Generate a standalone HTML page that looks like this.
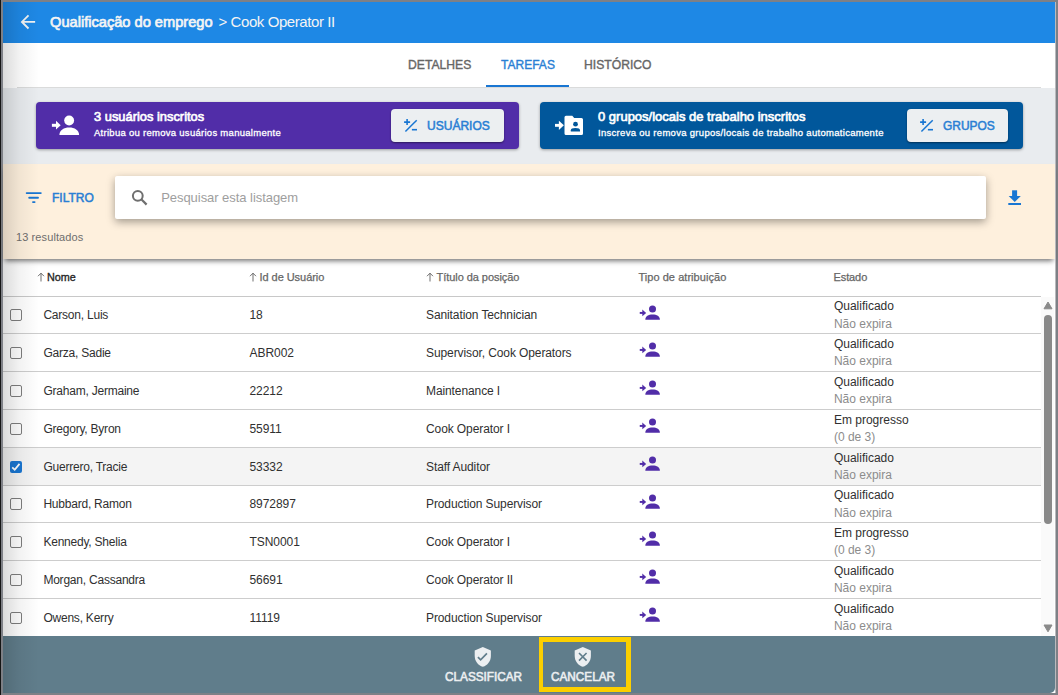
<!DOCTYPE html>
<html><head><meta charset="utf-8">
<style>
*{box-sizing:border-box;margin:0;padding:0}
html,body{width:1058px;height:695px;overflow:hidden;background:#7e8086;font-family:"Liberation Sans",sans-serif;position:relative}
.abs{position:absolute}
.t{position:absolute;white-space:nowrap}
.card{border-radius:4px;box-shadow:0 1px 3px rgba(0,0,0,.35)}
.btn{background:#eceff1;border-radius:4px;box-shadow:0 1px 2px rgba(0,0,0,.45)}
</style></head><body>
<div class="abs" style="left:0;top:0;width:1px;height:695px;background:#151515"></div>
<div class="abs" style="left:3px;top:2px;width:1052px;height:691px;background:#fff"></div>
<div class="abs" style="left:3px;top:2px;width:1052px;height:41px;background:#1e88e5"></div>
<svg class="abs" style="left:16.9px;top:11.3px" width="21.75" height="21.75" viewBox="0 0 24 24"><path fill="#f3f3f3" d="M20 11H7.83l5.59-5.59L12 4l-8 8 8 8 1.41-1.41L7.83 13H20v-2z"/></svg>
<div class="t" style="left:50px;top:14.40px;font-size:15px;line-height:15px;font-weight:normal;color:#f4f4f4;letter-spacing:0px;-webkit-text-stroke:0.7px #f4f4f4;transform:scaleX(0.975);transform-origin:0 0">Qualificação do emprego</div>
<div class="t" style="left:218.5px;top:14.40px;font-size:15px;line-height:15px;font-weight:normal;color:#f4f4f4;letter-spacing:-0.42px;">&gt; Cook Operator II</div>
<div class="abs" style="left:17px;top:87px;width:1024px;height:1px;background:#dadbdb"></div>
<div class="t" style="left:407.5px;top:57.74px;font-size:13px;line-height:13px;font-weight:normal;color:#666;letter-spacing:0px;-webkit-text-stroke:0.4px #666;transform:scaleX(0.935);transform-origin:0 0">DETALHES</div>
<div class="t" style="left:501px;top:57.74px;font-size:13px;line-height:13px;font-weight:normal;color:#2a7fd4;letter-spacing:0px;-webkit-text-stroke:0.4px #2a7fd4;transform:scaleX(0.925);transform-origin:0 0">TAREFAS</div>
<div class="t" style="left:584px;top:57.74px;font-size:13px;line-height:13px;font-weight:normal;color:#666;letter-spacing:0px;-webkit-text-stroke:0.4px #666;transform:scaleX(0.935);transform-origin:0 0">HISTÓRICO</div>
<div class="abs" style="left:486px;top:85px;width:83px;height:2px;background:#1976d2"></div>
<div class="abs" style="left:3px;top:88px;width:1052px;height:76px;background:#e9ecef"></div>
<div class="abs card" style="left:36px;top:102px;width:483px;height:47px;background:#512da8"></div>
<div class="abs card" style="left:540px;top:102px;width:483px;height:47px;background:#01579b"></div>
<svg class="abs" style="left:48px;top:110px" width="36" height="30" viewBox="0 0 36 30"><g fill="#fff">
<rect x="3.9" y="13.8" width="5" height="3"/><path d="M8 10.8L12.7 15.3 8 19.6z"/>
<circle cx="21.15" cy="10.55" r="4.95"/>
<path d="M11.4 25C11.4 20 16 17.5 21.25 17.5S31.1 20 31.1 25z"/></g></svg>
<div class="t" style="left:94px;top:109.89px;font-size:13px;line-height:13px;font-weight:normal;color:#fff;letter-spacing:0px;-webkit-text-stroke:0.65px #fff;transform:scaleX(0.99);transform-origin:0 0">3 usuários inscritos</div>
<div class="t" style="left:94px;top:127.86px;font-size:9.5px;line-height:9.5px;font-weight:normal;color:#fff;letter-spacing:0.28px;-webkit-text-stroke:0.3px #fff">Atribua ou remova usuários manualmente</div>
<div class="abs btn" style="left:391px;top:109px;width:113px;height:33px"></div>
<svg class="abs" style="left:396px;top:112px" width="28" height="28" viewBox="0 0 28 28"><g stroke="#1976d2" fill="none">
<path d="M8.1 10.1H14.1M11.1 7V13.1" stroke-width="1.6"/><path d="M9.4 19.5L20.7 8.2" stroke-width="1.5"/><path d="M15.9 17.7H21" stroke-width="1.6"/></g></svg>
<div class="t" style="left:427px;top:119.09px;font-size:13px;line-height:13px;font-weight:normal;color:#2a7fd4;letter-spacing:0px;-webkit-text-stroke:0.55px #2a7fd4;transform:scaleX(0.925);transform-origin:0 0">USUÁRIOS</div>
<svg class="abs" style="left:552px;top:110px" width="36" height="30" viewBox="0 0 36 30"><g fill="#fff">
<rect x="3" y="13.9" width="4.5" height="2.9"/><path d="M6.9 10.8L11.9 15.35 6.9 19.9z"/>
<path d="M14 5.8H20.3L22.2 8H29.5Q31 8 31 9.5V23.5Q31 25 29.5 25H14Q12.5 25 12.5 23.5V7.3Q12.5 5.8 14 5.8z"/></g>
<g fill="#01579b"><circle cx="23.5" cy="14.2" r="2.4"/><path d="M18.8 21.6V20.3Q18.8 18.1 23.4 18.1T28 20.3V21.6z"/></g></svg>
<div class="t" style="left:598px;top:109.89px;font-size:13px;line-height:13px;font-weight:normal;color:#fff;letter-spacing:0px;-webkit-text-stroke:0.65px #fff;transform:scaleX(1.0);transform-origin:0 0">0 grupos/locais de trabalho inscritos</div>
<div class="t" style="left:598px;top:127.86px;font-size:9.5px;line-height:9.5px;font-weight:normal;color:#fff;letter-spacing:0.3px;-webkit-text-stroke:0.3px #fff">Inscreva ou remova grupos/locais de trabalho automaticamente</div>
<div class="abs btn" style="left:907px;top:109px;width:101px;height:33px"></div>
<svg class="abs" style="left:912px;top:112px" width="28" height="28" viewBox="0 0 28 28"><g stroke="#1976d2" fill="none">
<path d="M8.1 10.1H14.1M11.1 7V13.1" stroke-width="1.6"/><path d="M9.4 19.5L20.7 8.2" stroke-width="1.5"/><path d="M15.9 17.7H21" stroke-width="1.6"/></g></svg>
<div class="t" style="left:943px;top:119.09px;font-size:13px;line-height:13px;font-weight:normal;color:#2a7fd4;letter-spacing:0px;-webkit-text-stroke:0.55px #2a7fd4;transform:scaleX(0.92);transform-origin:0 0">GRUPOS</div>
<div class="abs" style="left:3px;top:164px;width:1052px;height:94.5px;background:#fef0dd;box-shadow:0 4px 5px -2px rgba(0,0,0,.55)"></div>
<svg class="abs" style="left:20px;top:185px" width="28" height="25" viewBox="0 0 28 25"><g stroke="#1976d2" stroke-width="1.9" stroke-linecap="round">
<path d="M6.7 8.1H20.8M9.2 12.7H18M13 17.1H14.6"/></g></svg>
<div class="t" style="left:51.5px;top:190.89px;font-size:13px;line-height:13px;font-weight:normal;color:#2a7fd4;letter-spacing:0px;-webkit-text-stroke:0.55px #2a7fd4;transform:scaleX(0.925);transform-origin:0 0">FILTRO</div>
<div class="abs" style="left:115px;top:176px;width:871px;height:43px;background:#fff;border-radius:2px;box-shadow:0 3px 8px rgba(0,0,0,.36)"></div>
<svg class="abs" style="left:128px;top:186px" width="22" height="22" viewBox="0 0 22 22"><g stroke="#6f6f6f" fill="none">
<circle cx="9.8" cy="9.8" r="4.9" stroke-width="2"/><path d="M13.3 13.3L18.6 18.6" stroke-width="2.2"/></g></svg>
<div class="t" style="left:161.2px;top:190.99px;font-size:13px;line-height:13px;font-weight:normal;color:#9e9e9e;letter-spacing:-0.05px;">Pesquisar esta listagem</div>
<svg class="abs" style="left:1000px;top:183px" width="28" height="28" viewBox="0 0 28 28"><g fill="#1976d2">
<rect x="12.1" y="7.3" width="5" height="6"/><path d="M8.7 12.9H20.8L14.75 19z"/><rect x="8.3" y="20" width="12.7" height="2"/></g></svg>
<div class="t" style="left:16px;top:231.69px;font-size:11px;line-height:11px;font-weight:normal;color:#6e6e6e;letter-spacing:0.1px;">13 resultados</div>
<div class="abs" style="left:3px;top:296px;width:1038px;height:1px;background:#c8c8c8"></div>
<svg class="abs" style="left:36.5px;top:272px" width="8" height="10" viewBox="0 0 8 10"><path d="M4 9.5V1.2M1 4.2L4 1.2 7 4.2" stroke="#555" stroke-width="0.85" fill="none"/></svg>
<div class="t" style="left:46.6px;top:271.69px;font-size:11px;line-height:11px;font-weight:normal;color:#262626;letter-spacing:0px;-webkit-text-stroke:0.35px #262626;transform:scaleX(0.98);transform-origin:0 0">Nome</div>
<svg class="abs" style="left:249px;top:272px" width="8" height="10" viewBox="0 0 8 10"><path d="M4 9.5V1.2M1 4.2L4 1.2 7 4.2" stroke="#555" stroke-width="0.85" fill="none"/></svg>
<div class="t" style="left:259.5px;top:271.69px;font-size:11px;line-height:11px;font-weight:normal;color:#666;letter-spacing:-0.05px;-webkit-text-stroke:0.25px #666">Id de Usuário</div>
<svg class="abs" style="left:426px;top:272px" width="8" height="10" viewBox="0 0 8 10"><path d="M4 9.5V1.2M1 4.2L4 1.2 7 4.2" stroke="#555" stroke-width="0.85" fill="none"/></svg>
<div class="t" style="left:436.5px;top:271.69px;font-size:11px;line-height:11px;font-weight:normal;color:#666;letter-spacing:-0.05px;-webkit-text-stroke:0.25px #666">Título da posição</div>
<div class="t" style="left:638.4px;top:271.69px;font-size:11px;line-height:11px;font-weight:normal;color:#666;letter-spacing:0.05px;-webkit-text-stroke:0.25px #666">Tipo de atribuição</div>
<div class="t" style="left:833.5px;top:271.69px;font-size:11px;line-height:11px;font-weight:normal;color:#666;letter-spacing:-0.1px;-webkit-text-stroke:0.25px #666">Estado</div>
<div class="abs" style="left:3px;top:333px;width:1038px;height:1px;background:#cdcdcd"></div>
<div class="abs" style="left:10px;top:309.00px;width:12px;height:12px;border:1.2px solid #7e7e7e;border-radius:2px;background:transparent"></div>
<div class="t" style="left:43.4px;top:309.04px;font-size:12px;line-height:12px;font-weight:normal;color:#303030;letter-spacing:-0.22px;">Carson, Luis</div>
<div class="t" style="left:249.5px;top:309.04px;font-size:12px;line-height:12px;font-weight:normal;color:#303030;letter-spacing:-0.05px;">18</div>
<div class="t" style="left:426px;top:309.04px;font-size:12px;line-height:12px;font-weight:normal;color:#303030;letter-spacing:-0.1px;">Sanitation Technician</div>
<svg class="abs" style="left:634px;top:299.60px" width="30" height="25" viewBox="0 0 30 25"><g fill="#512da8">
<rect x="5.75" y="11.95" width="3.5" height="1.95"/><path d="M8.3 9.6L12.2 12.9 8.3 16.2z"/><circle cx="18.5" cy="9" r="3.5"/>
<path d="M11.3 19.8C11.3 16.5 14.4 14.6 18.6 14.6S25.9 16.5 25.9 19.8z"/></g></svg>
<div class="t" style="left:833.9px;top:300.14px;font-size:12px;line-height:12px;font-weight:normal;color:#303030;letter-spacing:0px;">Qualificado</div>
<div class="t" style="left:833.9px;top:317.94px;font-size:12px;line-height:12px;font-weight:normal;color:#8c8c8c;letter-spacing:0px;">Não expira</div>
<div class="abs" style="left:3px;top:371px;width:1038px;height:1px;background:#cdcdcd"></div>
<div class="abs" style="left:10px;top:346.50px;width:12px;height:12px;border:1.2px solid #7e7e7e;border-radius:2px;background:transparent"></div>
<div class="t" style="left:43.4px;top:346.54px;font-size:12px;line-height:12px;font-weight:normal;color:#303030;letter-spacing:-0.22px;">Garza, Sadie</div>
<div class="t" style="left:249.5px;top:346.54px;font-size:12px;line-height:12px;font-weight:normal;color:#303030;letter-spacing:-0.05px;">ABR002</div>
<div class="t" style="left:426px;top:346.54px;font-size:12px;line-height:12px;font-weight:normal;color:#303030;letter-spacing:-0.1px;">Supervisor, Cook Operators</div>
<svg class="abs" style="left:634px;top:337.10px" width="30" height="25" viewBox="0 0 30 25"><g fill="#512da8">
<rect x="5.75" y="11.95" width="3.5" height="1.95"/><path d="M8.3 9.6L12.2 12.9 8.3 16.2z"/><circle cx="18.5" cy="9" r="3.5"/>
<path d="M11.3 19.8C11.3 16.5 14.4 14.6 18.6 14.6S25.9 16.5 25.9 19.8z"/></g></svg>
<div class="t" style="left:833.9px;top:337.64px;font-size:12px;line-height:12px;font-weight:normal;color:#303030;letter-spacing:0px;">Qualificado</div>
<div class="t" style="left:833.9px;top:355.44px;font-size:12px;line-height:12px;font-weight:normal;color:#8c8c8c;letter-spacing:0px;">Não expira</div>
<div class="abs" style="left:3px;top:409px;width:1038px;height:1px;background:#cdcdcd"></div>
<div class="abs" style="left:10px;top:384.50px;width:12px;height:12px;border:1.2px solid #7e7e7e;border-radius:2px;background:transparent"></div>
<div class="t" style="left:43.4px;top:384.54px;font-size:12px;line-height:12px;font-weight:normal;color:#303030;letter-spacing:-0.22px;">Graham, Jermaine</div>
<div class="t" style="left:249.5px;top:384.54px;font-size:12px;line-height:12px;font-weight:normal;color:#303030;letter-spacing:-0.05px;">22212</div>
<div class="t" style="left:426px;top:384.54px;font-size:12px;line-height:12px;font-weight:normal;color:#303030;letter-spacing:-0.1px;">Maintenance I</div>
<svg class="abs" style="left:634px;top:375.10px" width="30" height="25" viewBox="0 0 30 25"><g fill="#512da8">
<rect x="5.75" y="11.95" width="3.5" height="1.95"/><path d="M8.3 9.6L12.2 12.9 8.3 16.2z"/><circle cx="18.5" cy="9" r="3.5"/>
<path d="M11.3 19.8C11.3 16.5 14.4 14.6 18.6 14.6S25.9 16.5 25.9 19.8z"/></g></svg>
<div class="t" style="left:833.9px;top:375.64px;font-size:12px;line-height:12px;font-weight:normal;color:#303030;letter-spacing:0px;">Qualificado</div>
<div class="t" style="left:833.9px;top:393.44px;font-size:12px;line-height:12px;font-weight:normal;color:#8c8c8c;letter-spacing:0px;">Não expira</div>
<div class="abs" style="left:3px;top:447px;width:1038px;height:1px;background:#cdcdcd"></div>
<div class="abs" style="left:10px;top:422.50px;width:12px;height:12px;border:1.2px solid #7e7e7e;border-radius:2px;background:transparent"></div>
<div class="t" style="left:43.4px;top:422.54px;font-size:12px;line-height:12px;font-weight:normal;color:#303030;letter-spacing:-0.22px;">Gregory, Byron</div>
<div class="t" style="left:249.5px;top:422.54px;font-size:12px;line-height:12px;font-weight:normal;color:#303030;letter-spacing:-0.05px;">55911</div>
<div class="t" style="left:426px;top:422.54px;font-size:12px;line-height:12px;font-weight:normal;color:#303030;letter-spacing:-0.1px;">Cook Operator I</div>
<svg class="abs" style="left:634px;top:413.10px" width="30" height="25" viewBox="0 0 30 25"><g fill="#512da8">
<rect x="5.75" y="11.95" width="3.5" height="1.95"/><path d="M8.3 9.6L12.2 12.9 8.3 16.2z"/><circle cx="18.5" cy="9" r="3.5"/>
<path d="M11.3 19.8C11.3 16.5 14.4 14.6 18.6 14.6S25.9 16.5 25.9 19.8z"/></g></svg>
<div class="t" style="left:833.9px;top:413.64px;font-size:12px;line-height:12px;font-weight:normal;color:#303030;letter-spacing:0px;">Em progresso</div>
<div class="t" style="left:833.9px;top:431.44px;font-size:12px;line-height:12px;font-weight:normal;color:#8c8c8c;letter-spacing:0px;">(0 de 3)</div>
<div class="abs" style="left:3px;top:448px;width:1038px;height:37px;background:#f4f4f4"></div>
<div class="abs" style="left:3px;top:485px;width:1038px;height:1px;background:#cdcdcd"></div>
<svg class="abs" style="left:10px;top:460.50px" width="12" height="12" viewBox="0 0 12 12"><rect x="0" y="0" width="12" height="12" rx="2" fill="#1976d2"/><path d="M2.2 6.4L4.7 8.7 9.5 2.9" stroke="#fff" stroke-width="1.8" fill="none"/></svg>
<div class="t" style="left:43.4px;top:460.54px;font-size:12px;line-height:12px;font-weight:normal;color:#303030;letter-spacing:-0.22px;">Guerrero, Tracie</div>
<div class="t" style="left:249.5px;top:460.54px;font-size:12px;line-height:12px;font-weight:normal;color:#303030;letter-spacing:-0.05px;">53332</div>
<div class="t" style="left:426px;top:460.54px;font-size:12px;line-height:12px;font-weight:normal;color:#303030;letter-spacing:-0.1px;">Staff Auditor</div>
<svg class="abs" style="left:634px;top:451.10px" width="30" height="25" viewBox="0 0 30 25"><g fill="#512da8">
<rect x="5.75" y="11.95" width="3.5" height="1.95"/><path d="M8.3 9.6L12.2 12.9 8.3 16.2z"/><circle cx="18.5" cy="9" r="3.5"/>
<path d="M11.3 19.8C11.3 16.5 14.4 14.6 18.6 14.6S25.9 16.5 25.9 19.8z"/></g></svg>
<div class="t" style="left:833.9px;top:451.64px;font-size:12px;line-height:12px;font-weight:normal;color:#303030;letter-spacing:0px;">Qualificado</div>
<div class="t" style="left:833.9px;top:469.44px;font-size:12px;line-height:12px;font-weight:normal;color:#8c8c8c;letter-spacing:0px;">Não expira</div>
<div class="abs" style="left:3px;top:522px;width:1038px;height:1px;background:#cdcdcd"></div>
<div class="abs" style="left:10px;top:498.00px;width:12px;height:12px;border:1.2px solid #7e7e7e;border-radius:2px;background:transparent"></div>
<div class="t" style="left:43.4px;top:498.04px;font-size:12px;line-height:12px;font-weight:normal;color:#303030;letter-spacing:-0.22px;">Hubbard, Ramon</div>
<div class="t" style="left:249.5px;top:498.04px;font-size:12px;line-height:12px;font-weight:normal;color:#303030;letter-spacing:-0.05px;">8972897</div>
<div class="t" style="left:426px;top:498.04px;font-size:12px;line-height:12px;font-weight:normal;color:#303030;letter-spacing:-0.1px;">Production Supervisor</div>
<svg class="abs" style="left:634px;top:488.60px" width="30" height="25" viewBox="0 0 30 25"><g fill="#512da8">
<rect x="5.75" y="11.95" width="3.5" height="1.95"/><path d="M8.3 9.6L12.2 12.9 8.3 16.2z"/><circle cx="18.5" cy="9" r="3.5"/>
<path d="M11.3 19.8C11.3 16.5 14.4 14.6 18.6 14.6S25.9 16.5 25.9 19.8z"/></g></svg>
<div class="t" style="left:833.9px;top:489.14px;font-size:12px;line-height:12px;font-weight:normal;color:#303030;letter-spacing:0px;">Qualificado</div>
<div class="t" style="left:833.9px;top:506.94px;font-size:12px;line-height:12px;font-weight:normal;color:#8c8c8c;letter-spacing:0px;">Não expira</div>
<div class="abs" style="left:3px;top:560px;width:1038px;height:1px;background:#cdcdcd"></div>
<div class="abs" style="left:10px;top:535.50px;width:12px;height:12px;border:1.2px solid #7e7e7e;border-radius:2px;background:transparent"></div>
<div class="t" style="left:43.4px;top:535.54px;font-size:12px;line-height:12px;font-weight:normal;color:#303030;letter-spacing:-0.22px;">Kennedy, Shelia</div>
<div class="t" style="left:249.5px;top:535.54px;font-size:12px;line-height:12px;font-weight:normal;color:#303030;letter-spacing:-0.05px;">TSN0001</div>
<div class="t" style="left:426px;top:535.54px;font-size:12px;line-height:12px;font-weight:normal;color:#303030;letter-spacing:-0.1px;">Cook Operator I</div>
<svg class="abs" style="left:634px;top:526.10px" width="30" height="25" viewBox="0 0 30 25"><g fill="#512da8">
<rect x="5.75" y="11.95" width="3.5" height="1.95"/><path d="M8.3 9.6L12.2 12.9 8.3 16.2z"/><circle cx="18.5" cy="9" r="3.5"/>
<path d="M11.3 19.8C11.3 16.5 14.4 14.6 18.6 14.6S25.9 16.5 25.9 19.8z"/></g></svg>
<div class="t" style="left:833.9px;top:526.64px;font-size:12px;line-height:12px;font-weight:normal;color:#303030;letter-spacing:0px;">Em progresso</div>
<div class="t" style="left:833.9px;top:544.44px;font-size:12px;line-height:12px;font-weight:normal;color:#8c8c8c;letter-spacing:0px;">(0 de 3)</div>
<div class="abs" style="left:3px;top:598px;width:1038px;height:1px;background:#cdcdcd"></div>
<div class="abs" style="left:10px;top:573.50px;width:12px;height:12px;border:1.2px solid #7e7e7e;border-radius:2px;background:transparent"></div>
<div class="t" style="left:43.4px;top:573.54px;font-size:12px;line-height:12px;font-weight:normal;color:#303030;letter-spacing:-0.22px;">Morgan, Cassandra</div>
<div class="t" style="left:249.5px;top:573.54px;font-size:12px;line-height:12px;font-weight:normal;color:#303030;letter-spacing:-0.05px;">56691</div>
<div class="t" style="left:426px;top:573.54px;font-size:12px;line-height:12px;font-weight:normal;color:#303030;letter-spacing:-0.1px;">Cook Operator II</div>
<svg class="abs" style="left:634px;top:564.10px" width="30" height="25" viewBox="0 0 30 25"><g fill="#512da8">
<rect x="5.75" y="11.95" width="3.5" height="1.95"/><path d="M8.3 9.6L12.2 12.9 8.3 16.2z"/><circle cx="18.5" cy="9" r="3.5"/>
<path d="M11.3 19.8C11.3 16.5 14.4 14.6 18.6 14.6S25.9 16.5 25.9 19.8z"/></g></svg>
<div class="t" style="left:833.9px;top:564.64px;font-size:12px;line-height:12px;font-weight:normal;color:#303030;letter-spacing:0px;">Qualificado</div>
<div class="t" style="left:833.9px;top:582.44px;font-size:12px;line-height:12px;font-weight:normal;color:#8c8c8c;letter-spacing:0px;">Não expira</div>
<div class="abs" style="left:10px;top:611.50px;width:12px;height:12px;border:1.2px solid #7e7e7e;border-radius:2px;background:transparent"></div>
<div class="t" style="left:43.4px;top:611.54px;font-size:12px;line-height:12px;font-weight:normal;color:#303030;letter-spacing:-0.22px;">Owens, Kerry</div>
<div class="t" style="left:249.5px;top:611.54px;font-size:12px;line-height:12px;font-weight:normal;color:#303030;letter-spacing:-0.05px;">11119</div>
<div class="t" style="left:426px;top:611.54px;font-size:12px;line-height:12px;font-weight:normal;color:#303030;letter-spacing:-0.1px;">Production Supervisor</div>
<svg class="abs" style="left:634px;top:602.10px" width="30" height="25" viewBox="0 0 30 25"><g fill="#512da8">
<rect x="5.75" y="11.95" width="3.5" height="1.95"/><path d="M8.3 9.6L12.2 12.9 8.3 16.2z"/><circle cx="18.5" cy="9" r="3.5"/>
<path d="M11.3 19.8C11.3 16.5 14.4 14.6 18.6 14.6S25.9 16.5 25.9 19.8z"/></g></svg>
<div class="t" style="left:833.9px;top:602.64px;font-size:12px;line-height:12px;font-weight:normal;color:#303030;letter-spacing:0px;">Qualificado</div>
<div class="t" style="left:833.9px;top:620.44px;font-size:12px;line-height:12px;font-weight:normal;color:#8c8c8c;letter-spacing:0px;">Não expira</div>
<div class="abs" style="left:1041px;top:297px;width:13px;height:339px;background:#fafafa"></div>
<svg class="abs" style="left:1043px;top:301px" width="10" height="9" viewBox="0 0 10 9"><path d="M5 1L9 7.8H1z" fill="#8a8a8a" stroke="#8a8a8a" stroke-width="1" stroke-linejoin="round"/></svg>
<div class="abs" style="left:1044px;top:314.8px;width:8px;height:208.8px;background:#898989;border-radius:4px"></div>
<svg class="abs" style="left:1043px;top:624px" width="10" height="9" viewBox="0 0 10 9"><path d="M5 7.8L9 1H1z" fill="#8a8a8a" stroke="#8a8a8a" stroke-width="1" stroke-linejoin="round"/></svg>
<div class="abs" style="left:3px;top:636px;width:1052px;height:57px;background:#607d8b;border-bottom-right-radius:5px"></div>
<svg class="abs" style="left:472px;top:646.1px" width="21.6" height="21.6" viewBox="0 0 24 24"><path fill="#eceff1" d="M12 1L3 5v6c0 5.55 3.84 10.74 9 12 5.16-1.26 9-6.45 9-12V5l-9-4z"/><path d="M6.6 12.3L9.6 15.3 16.6 8.3" stroke="#607d8b" stroke-width="1.9" fill="none"/></svg>
<div class="t" style="left:445px;top:670.84px;font-size:12px;line-height:12px;font-weight:normal;color:#eceff1;letter-spacing:0px;-webkit-text-stroke:0.55px #eceff1;transform:scaleX(0.98);transform-origin:0 0">CLASSIFICAR</div>
<svg class="abs" style="left:572px;top:646.1px" width="21.6" height="21.6" viewBox="0 0 24 24"><path fill="#eceff1" d="M12 1L3 5v6c0 5.55 3.84 10.74 9 12 5.16-1.26 9-6.45 9-12V5l-9-4z"/><path d="M7.8 7.8L16.2 16.2M16.2 7.8L7.8 16.2" stroke="#607d8b" stroke-width="1.8" fill="none"/></svg>
<div class="t" style="left:551px;top:670.84px;font-size:12px;line-height:12px;font-weight:normal;color:#eceff1;letter-spacing:0px;-webkit-text-stroke:0.55px #eceff1;transform:scaleX(0.98);transform-origin:0 0">CANCELAR</div>
<div class="abs" style="left:539px;top:637px;width:92px;height:55px;border:5px solid #fccf00;border-left-width:4.5px"></div>
<div class="abs" style="left:1055px;top:2px;width:1px;height:691px;background:#b9babd"></div>
<div class="abs" style="left:3px;top:2px;width:36px;height:691px;background:linear-gradient(to right,rgba(0,0,0,.14),rgba(0,0,0,.05) 45%,rgba(0,0,0,0))"></div>
</body></html>
